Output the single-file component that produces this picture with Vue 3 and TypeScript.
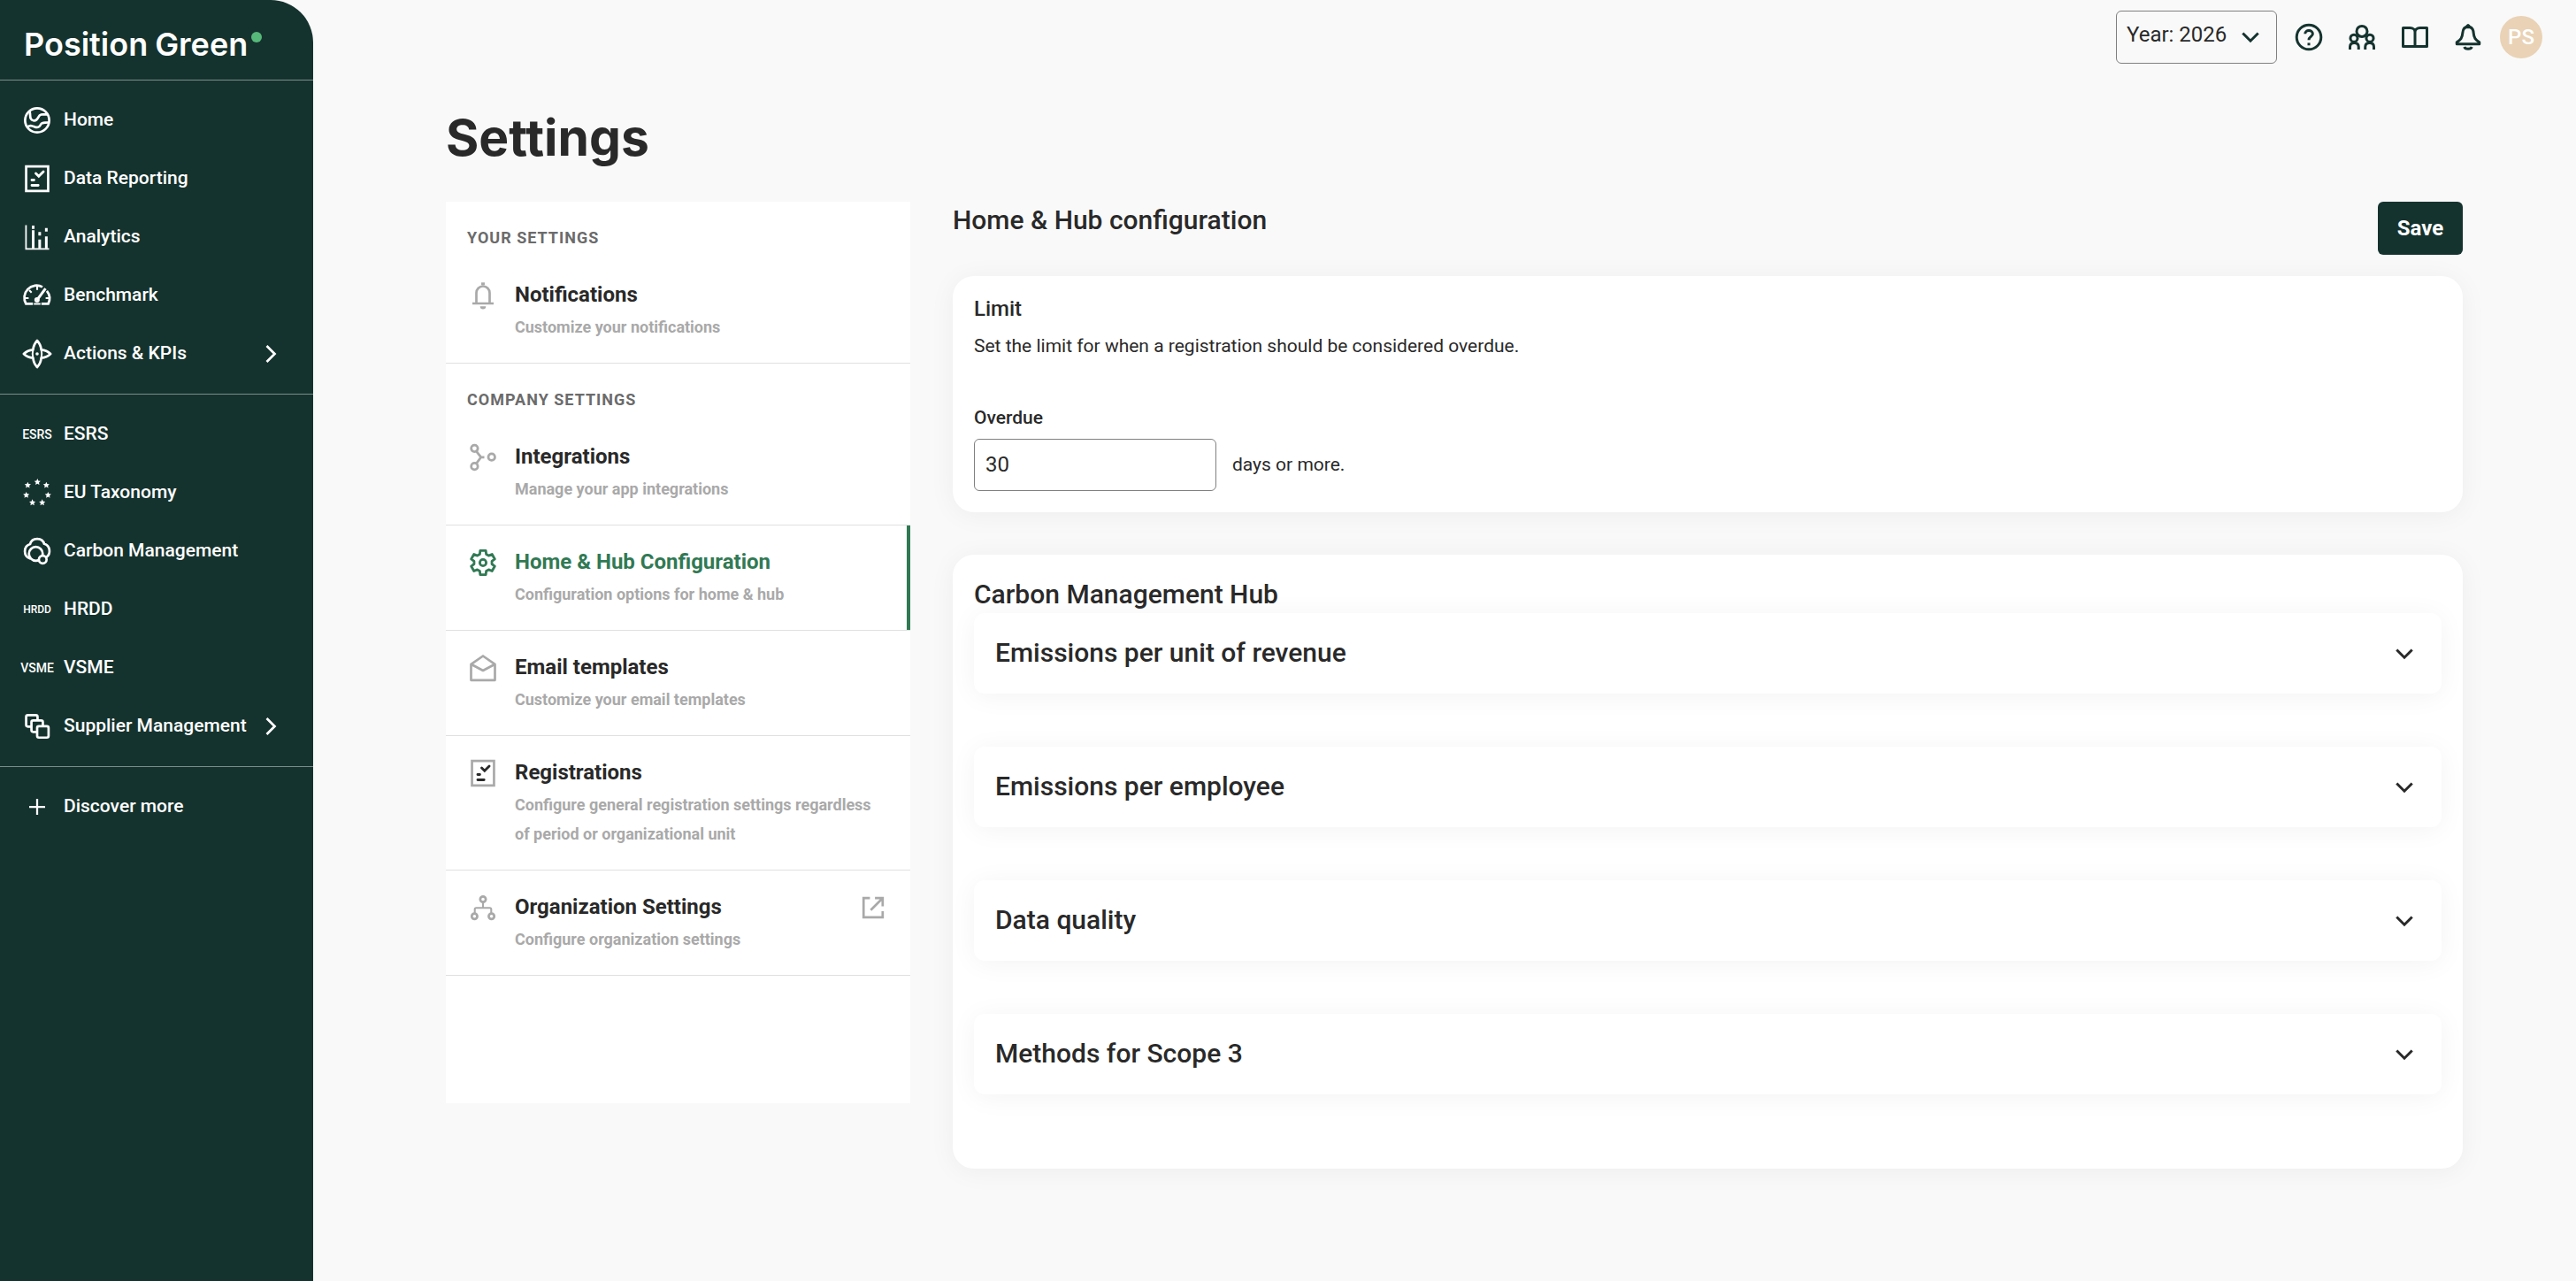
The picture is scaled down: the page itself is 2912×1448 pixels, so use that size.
<script setup lang="ts">
import { ref } from 'vue'

interface NavItem {
  label: string
  icon?: string
  badge?: string
  badgeSmall?: boolean
  expandable?: boolean
}

interface SettingItem {
  title: string
  text: string
  icon: string
  active?: boolean
  external?: boolean
}

interface SettingGroup {
  heading: string
  items: SettingItem[]
}

/* Regular star or cog outlines are computed rather than typed out by hand. */
function point(cx: number, cy: number, r: number, deg: number): string {
  const a = (deg * Math.PI) / 180
  return `${(cx + r * Math.cos(a)).toFixed(2)} ${(cy + r * Math.sin(a)).toFixed(2)}`
}

function star(cx: number, cy: number): string {
  const pts = Array.from({ length: 10 }, (_, i) => point(cx, cy, i % 2 ? 1.2 : 2.5, -90 + i * 36))
  return `M${pts.join('L')}Z`
}

function cog(): string {
  const pts: string[] = []
  for (let k = 0; k < 6; k++) {
    const a = -90 + k * 60
    pts.push(point(12, 12, 6.8, a - 21), point(12, 12, 9.3, a - 13), point(12, 12, 9.3, a + 13), point(12, 12, 6.8, a + 21))
  }
  return `M${pts.join('L')}Z`
}

const starCenters: [number, number][] = [
  [12.2, 3.9], [18.9, 6.3], [20.2, 13.8], [15.8, 19.4], [8.4, 19.4], [3.8, 13.8], [4.9, 6.3],
]

const icons: Record<string, string> = {
  globe:
    '<circle cx="12" cy="12" r="9.1"/><path d="M6.300 5.200C7 7.400 6.400 9.200 7.200 10.800c.8 1.500 2.900 1.900 4.300.8 1.500-1.200 1.300-3.300 3.500-3.900 1.500-.4 3 .2 4.800-.2"/><path d="M4.600 17.200c1-.9 2.300-1.300 3.800-.9 1.500.3 2.500 1.300 4.200.9 2-.5 1.600-2.300 3.200-3.100 1.600-.7 3.300.1 5-.7"/>',
  report:
    '<path d="M3.700 2.800h16.600v18.400H3.700z"/><path class="mark" stroke-width="1.900" stroke-linecap="round" d="M11 8l2.200 2.200 3.500-3.500M8 13h1.600M8 17h4.800"/>',
  chart:
    '<path stroke-width="1.200" d="M3.600 3v17.900H21"/><path stroke-width="2" d="M9 6.900V20.500M13.900 13.800v6.700M18.900 11.500v9M9 3.300v2.600M13.900 8.200v2.600M18.900 5.200v2.600"/>',
  gauge:
    '<path d="M8.800 18.300H3.600A9.200 9.200 0 0 1 16 5.600M19.300 8.600a9.200 9.200 0 0 1 1.100 9.700h-5.200"/><path stroke-width="1.400" d="M12 5v2.800M6 8l1.800 1.800M3 14h2.600M21 14h-2.600M9.500 18.300h5"/><path stroke-width="2" d="M12 15.300l6.300-8.600"/><circle cx="11.900" cy="15.300" r="1.100"/>',
  spark:
    '<path stroke-linejoin="round" d="M12 2c1.500 1.600 2.800 4 3.100 6.900C18 9.200 20.600 10.600 22.100 12c-1.500 1.400-4.100 2.800-7 3.100C14.800 18 13.500 20.400 12 22c-1.500-1.600-2.800-4-3.100-6.900C6 14.800 3.400 13.400 1.900 12c1.500-1.400 4.100-2.800 7-3.100C9.200 6 10.500 3.600 12 2z"/><path stroke-width="1.300" d="M8.900 8.900c-.5 2-.5 4.200 0 6.200M15.100 8.900c.5 2 .5 4.200 0 6.200"/><circle cx="12" cy="12" r=".7" fill="currentColor" stroke-width="1"/>',
  stars: `<path fill="currentColor" stroke="none" d="${starCenters.map(([x, y]) => star(x, y)).join('')}"/>`,
  cloud:
    '<path d="M6.800 17.700C1.500 16 1.300 8.300 6.700 6.700 8 1.400 16 1.400 17.300 6.500c4.700 1.300 5.200 7.500 1.700 10"/><circle cx="11" cy="14" r="5.200"/><circle class="solid" cx="16.200" cy="18.300" r="2.900"/>',
  copies:
    '<rect x="3.700" y="3.600" width="8.600" height="8.600" rx="1.300"/><rect class="solid" x="7.700" y="7.600" width="8.600" height="8.600" rx="1.300"/><rect class="solid" x="12" y="11.900" width="8.600" height="8.600" rx="1.300"/>',
  plus: '<path stroke-width="1.500" d="M12 6v12M6 12h12"/>',
  help:
    '<circle cx="12" cy="12" r="9.200"/><path d="M9.200 9.500C9.200 8 10.400 7 12 7s2.900 1 2.900 2.500c0 2.100-2.900 2.200-2.900 4.600"/><path d="M12 16.300v1.900"/>',
  people:
    '<circle cx="12" cy="7.600" r="4"/><circle cx="6" cy="12.800" r="2.700"/><circle cx="18" cy="12.800" r="2.700"/><path d="M3 21.300v-2c0-2 1.300-3 3.200-3s3.300 1 3.300 3v2M14.500 21.300v-2c0-2 1.400-3 3.300-3s3.200 1 3.200 3v2"/>',
  book:
    '<path stroke-linejoin="round" d="M12 19H3V5h5.200C10.500 5 12 6.300 12 8.200c0-1.900 1.500-3.200 3.800-3.200H21v14h-9V8.200"/>',
  bell:
    '<path stroke-linejoin="round" d="M12 4.200c-2.700 0-3.900 1.800-4.100 4.600-.3 4-1.500 5.100-4.400 7V17.200h17v-1.400c-2.900-1.900-4.100-3-4.400-7-.2-2.800-1.400-4.600-4.100-4.600z"/><path fill="currentColor" stroke-width="1" stroke-linejoin="round" d="M9.800 5c.6-1 1.300-2.300 2.200-2.500.9.2 1.600 1.500 2.200 2.500z"/><path d="M9.200 19.300c.6 2 5 2 5.600 0"/>',
  notify:
    '<path d="M7 17.800V10a5 5 0 0 1 10 0v7.800M4 18h16"/><path stroke-width="2.600" d="M12 2.200v2"/><path fill="currentColor" stroke="none" d="M9.800 20.100h4.400a2.200 2.200 0 0 1-4.400 0z"/>',
  nodes:
    '<circle cx="5.600" cy="5.200" r="2.500"/><circle cx="5.600" cy="18.800" r="2.500"/><circle cx="18.500" cy="11.800" r="2.500"/><path d="M7 7.400l3.500 4.500-3.500 4.700M10.500 11.900H13"/>',
  cog: `<path stroke-width="1.900" stroke-linejoin="round" d="${cog()}"/><circle stroke-width="1.900" cx="12" cy="12" r="2.400"/>`,
  mail:
    '<path stroke-linejoin="round" d="M3 9.200L12 3l9 6.200v12H3zL12 14l9-4.800"/>',
  tree:
    '<circle cx="12" cy="5.700" r="2.100"/><circle cx="5.600" cy="18.500" r="2.100"/><circle cx="18.400" cy="18.500" r="2.100"/><path stroke-width="1.400" d="M12 7.800v4.400M5.800 16.400v-3.100c0-.7.4-1.100 1.100-1.100h10.200c.7 0 1.100.4 1.100 1.100v3.100"/>',
  external:
    '<path d="M9.600 4.800H4.800v14.400h14.400v-4.600M13.400 4.800h5.800V11M19 5l-8.800 8.800"/>',
  right: '<path stroke-width="1.800" d="M9 6l6 6-6 6"/>',
  down: '<path stroke-width="2" d="M6.200 9l5.800 5.800L17.800 9"/>',
}

const navGroups: NavItem[][] = [
  [
    { label: 'Home', icon: 'globe' },
    { label: 'Data Reporting', icon: 'report' },
    { label: 'Analytics', icon: 'chart' },
    { label: 'Benchmark', icon: 'gauge' },
    { label: 'Actions & KPIs', icon: 'spark', expandable: true },
  ],
  [
    { label: 'ESRS', badge: 'ESRS' },
    { label: 'EU Taxonomy', icon: 'stars' },
    { label: 'Carbon Management', icon: 'cloud' },
    { label: 'HRDD', badge: 'HRDD', badgeSmall: true },
    { label: 'VSME', badge: 'VSME' },
    { label: 'Supplier Management', icon: 'copies', expandable: true },
  ],
  [{ label: 'Discover more', icon: 'plus' }],
]

const tools = [
  { icon: 'help', label: 'Help' },
  { icon: 'people', label: 'Community' },
  { icon: 'book', label: 'Guides' },
  { icon: 'bell', label: 'Notifications' },
]

const settingGroups: SettingGroup[] = [
  {
    heading: 'YOUR SETTINGS',
    items: [{ title: 'Notifications', text: 'Customize your notifications', icon: 'notify' }],
  },
  {
    heading: 'COMPANY SETTINGS',
    items: [
      { title: 'Integrations', text: 'Manage your app integrations', icon: 'nodes' },
      { title: 'Home & Hub Configuration', text: 'Configuration options for home & hub', icon: 'cog', active: true },
      { title: 'Email templates', text: 'Customize your email templates', icon: 'mail' },
      {
        title: 'Registrations',
        text: 'Configure general registration settings regardless of period or organizational unit',
        icon: 'report',
      },
      { title: 'Organization Settings', text: 'Configure organization settings', icon: 'tree', external: true },
    ],
  },
]

const panels = ['Emissions per unit of revenue', 'Emissions per employee', 'Data quality', 'Methods for Scope 3']

const year = ref('2026')
const overdue = ref('30')
</script>

<template>
  <div class="app">
    <aside class="sidebar">
      <a class="logo" href="#"><span>Position</span><span>Green</span><i class="dot"></i></a>
      <nav>
        <ul v-for="(group, g) in navGroups" :key="g" class="nav-group">
          <li v-for="item in group" :key="item.label">
            <a class="nav-item" href="#">
              <svg v-if="item.icon" class="icon" viewBox="0 0 24 24" aria-hidden="true" v-html="icons[item.icon]"></svg>
              <span v-else class="badge" :class="{ small: item.badgeSmall }" aria-hidden="true">{{ item.badge }}</span>
              <span class="nav-label">{{ item.label }}</span>
              <svg v-if="item.expandable" class="icon" viewBox="0 0 24 24" aria-hidden="true" v-html="icons.right"></svg>
            </a>
          </li>
        </ul>
      </nav>
    </aside>

    <div class="page">
      <header class="topbar">
        <div class="year">
          <select v-model="year" aria-label="Year">
            <option value="2026">Year: 2026</option>
            <option value="2025">Year: 2025</option>
          </select>
          <svg class="icon year-arrow" viewBox="0 0 24 24" aria-hidden="true" v-html="icons.down"></svg>
        </div>
        <button v-for="tool in tools" :key="tool.icon" class="tool" type="button" :aria-label="tool.label">
          <svg class="icon" viewBox="0 0 24 24" aria-hidden="true" v-html="icons[tool.icon]"></svg>
        </button>
        <button class="avatar" type="button">PS</button>
      </header>

      <main class="content">
        <h1>Settings</h1>
        <div class="columns">
          <nav class="settings-nav">
            <section v-for="group in settingGroups" :key="group.heading">
              <h2>{{ group.heading }}</h2>
              <a
                v-for="item in group.items"
                :key="item.title"
                class="setting"
                :class="{ active: item.active }"
                href="#"
              >
                <svg class="icon" viewBox="0 0 24 24" aria-hidden="true" v-html="icons[item.icon]"></svg>
                <span class="setting-copy">
                  <span class="setting-title">{{ item.title }}</span>
                  <span class="setting-text">{{ item.text }}</span>
                </span>
                <svg v-if="item.external" class="icon" viewBox="0 0 24 24" aria-hidden="true" v-html="icons.external"></svg>
              </a>
            </section>
          </nav>

          <div class="config">
            <div class="config-head">
              <h2 class="heading">Home &amp; Hub configuration</h2>
              <button class="save" type="button">Save</button>
            </div>

            <section class="card">
              <h3 class="limit">Limit</h3>
              <p class="body">Set the limit for when a registration should be considered overdue.</p>
              <label class="field-label" for="overdue">Overdue</label>
              <div class="field">
                <input id="overdue" v-model="overdue" type="text" />
                <span class="body">days or more.</span>
              </div>
            </section>

            <section class="card">
              <h2 class="heading">Carbon Management Hub</h2>
              <button v-for="panel in panels" :key="panel" class="panel" type="button">
                <span class="heading">{{ panel }}</span>
                <svg class="icon" viewBox="0 0 24 24" aria-hidden="true" v-html="icons.down"></svg>
              </button>
            </section>
          </div>
        </div>
      </main>
    </div>
  </div>
</template>

<style>
body {
  margin: 0;
  background: #f9f9f9;
}
</style>

<style scoped>
.app {
  display: flex;
  min-height: 100vh;
  font-family: Roboto, "Liberation Sans", sans-serif;
  font-size: 21px;
  line-height: 30px;
  color: #292929;
  background: #f9f9f9;
}

.app *,
.app *::before {
  box-sizing: border-box;
}

h1,
h2,
h3,
p,
ul {
  margin: 0;
  padding: 0;
}

a {
  color: inherit;
  text-decoration: none;
}

button,
input,
select {
  font: inherit;
  color: inherit;
}

button {
  padding: 0;
  border: 0;
  background: none;
  cursor: pointer;
}

.icon {
  flex: none;
  display: block;
  width: 36px;
  height: 36px;
  fill: none;
  stroke: currentColor;
  stroke-width: 1.8;
}

/* Sidebar */
.sidebar {
  flex: none;
  width: 354px;
  background: #15332e;
  color: #fff;
  border-top-right-radius: 48px;
}

.logo {
  display: flex;
  gap: 8px;
  height: 90px;
  padding: 29px 0 0 27px;
  font-family: Inter, "Liberation Sans", sans-serif;
  font-size: 36px;
  font-weight: 600;
  line-height: 42px;
}

.dot {
  width: 12px;
  height: 12px;
  margin: 7px 0 0 -4px;
  border-radius: 50%;
  background: #56b979;
}

.nav-group {
  padding: 12px 0;
  border-top: 1px solid #7a8c89;
  list-style: none;
}

.nav-item {
  display: flex;
  align-items: center;
  gap: 12px;
  height: 66px;
  padding: 0 30px 0 24px;
  font-weight: 500;
}

.nav-item :deep(.solid) {
  fill: #15332e;
}

.nav-label {
  flex: 1;
  min-width: 0;
  padding-bottom: 2px;
  white-space: nowrap;
}

.badge {
  display: flex;
  justify-content: center;
  flex: none;
  width: 36px;
  font-size: 14px;
}

.badge.small {
  font-size: 12px;
}

/* Top bar */
.page {
  flex: 1;
  min-width: 0;
}

.topbar {
  display: flex;
  align-items: center;
  justify-content: flex-end;
  gap: 24px;
  height: 84px;
  padding-right: 38px;
  color: #15332e;
}

.topbar .tool .icon {
  stroke-width: 2;
}

.year {
  position: relative;
  margin-right: -6px;
}

.year select {
  display: block;
  width: 182px;
  height: 60px;
  padding: 0 48px 6px 11px;
  border: 1px solid #808080;
  border-radius: 6px;
  background: transparent;
  appearance: none;
  color: #292929;
  font-size: 24px;
}

.year-arrow {
  position: absolute;
  top: 12px;
  right: 12px;
  pointer-events: none;
}

.avatar {
  width: 48px;
  height: 48px;
  margin-left: -6px;
  border-radius: 50%;
  background: #e9d2b5;
  color: #fff;
  font-size: 24px;
  font-weight: 500;
}

/* Page content */
.content {
  padding: 36px 128px 96px 150px;
}

h1 {
  margin-bottom: 36px;
  font-family: Inter, "Liberation Sans", sans-serif;
  font-size: 57px;
  font-weight: 700;
  line-height: 72px;
}

.columns {
  display: flex;
  align-items: flex-start;
  gap: 48px;
}

.settings-nav {
  flex: none;
  width: 525px;
  padding-bottom: 144px;
  background: #fff;
}

.settings-nav h2 {
  padding: 24px 24px 7px;
  color: #6b6b6b;
  font-size: 18px;
  font-weight: 700;
  line-height: 33px;
  letter-spacing: 1px;
}

.setting {
  position: relative;
  display: flex;
  gap: 18px;
  padding: 23px 24px 24px;
  border-bottom: 1px solid #e0e0e0;
  color: #a9a9a9;
  font-weight: 700;
}

.setting .icon {
  margin-top: 1px;
}

.setting :deep(.mark) {
  stroke: #292929;
}

.setting-copy {
  flex: 1;
  display: flex;
  flex-direction: column;
  gap: 2px;
  padding-right: 12px;
}

.setting-title {
  color: #292929;
  font-size: 24px;
  line-height: 36px;
}

.setting-text {
  font-size: 18px;
  line-height: 33px;
}

.setting.active::before {
  content: "";
  position: absolute;
  top: 0;
  right: 0;
  bottom: 0;
  width: 4px;
  background: #317954;
}

.active .icon,
.active .setting-title {
  color: #317954;
}

.config {
  flex: 1;
  min-width: 0;
}

.config-head {
  display: flex;
  justify-content: space-between;
  margin-bottom: 24px;
}

.heading {
  font-size: 30px;
  font-weight: 500;
  line-height: 42px;
}

.save {
  width: 96px;
  height: 60px;
  border-radius: 6px;
  background: #15332e;
  color: #fff;
  font-size: 24px;
  font-weight: 700;
}

.card {
  padding: 24px;
  border-radius: 24px;
  background: #fff;
  box-shadow: 0 3px 30px rgba(0, 0, 0, 0.05);
}

.card + .card {
  margin-top: 48px;
}

.limit {
  margin-bottom: 13px;
  font-size: 24px;
  font-weight: 500;
  line-height: 27px;
}

.body {
  line-height: 30px;
}

.field-label {
  display: block;
  margin-top: 51px;
  font-weight: 500;
}

.field {
  display: flex;
  align-items: center;
  gap: 18px;
  margin-top: 9px;
}

.field .body {
  padding-bottom: 2px;
}

.field input {
  width: 274px;
  height: 59px;
  padding: 0 12px 2px;
  border: 1px solid #808080;
  border-radius: 6px;
  background: #fff;
  font-size: 24px;
}

.panel {
  display: flex;
  align-items: center;
  justify-content: space-between;
  width: 100%;
  height: 91px;
  margin-bottom: 60px;
  padding: 0 24px;
  border-radius: 12px;
  background: #fff;
  box-shadow: 0 3px 30px rgba(0, 0, 0, 0.05);
  text-align: left;
}

.panel .heading {
  padding-bottom: 2px;
}
</style>
